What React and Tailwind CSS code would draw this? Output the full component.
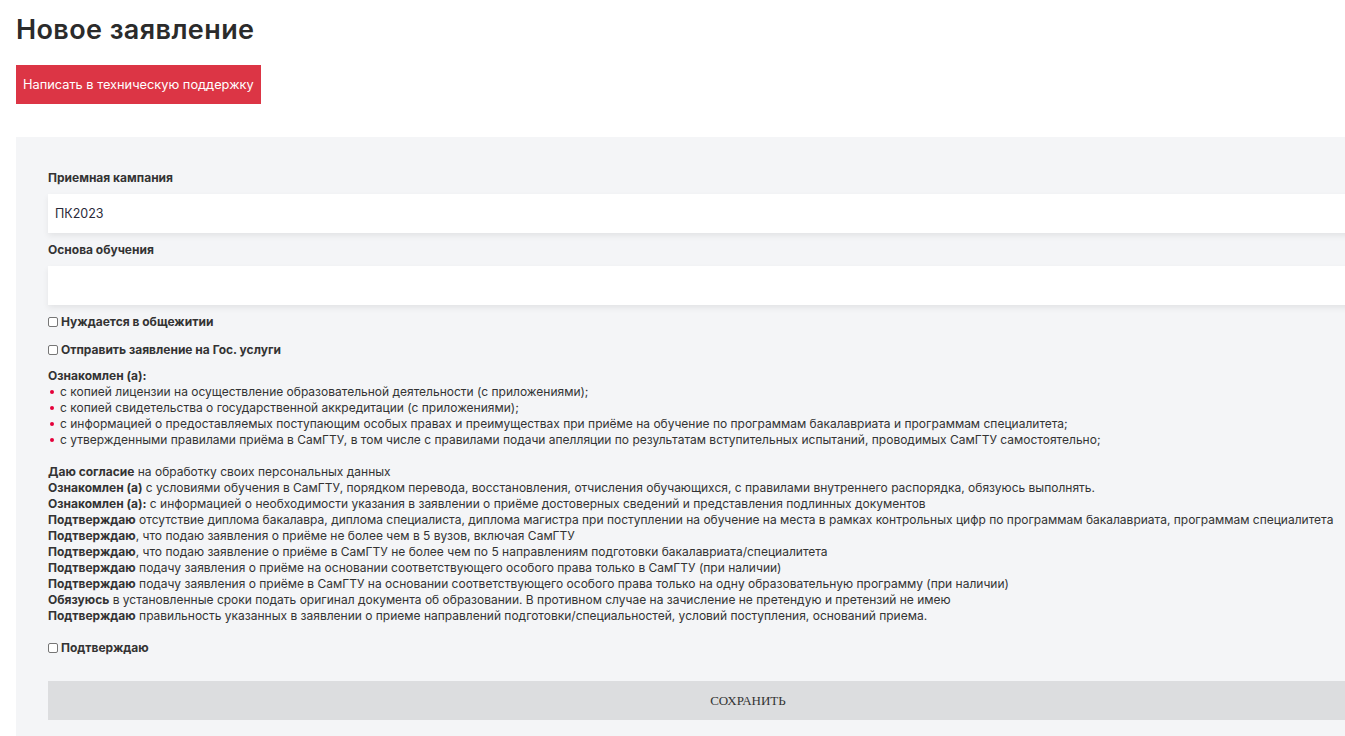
import React from 'react';

const bullets = [
    'с копией лицензии на осуществление образовательной деятельности (с приложениями);',
    'с копией свидетельства о государственной аккредитации (с приложениями);',
    'с информацией о предоставляемых поступающим особых правах и преимуществах при приёме на обучение по программам бакалавриата и программам специалитета;',
    'с утвержденными правилами приёма в СамГТУ, в том числе с правилами подачи апелляции по результатам вступительных испытаний, проводимых СамГТУ самостоятельно;',
];

const statements = [
    ['Даю согласие', ' на обработку своих персональных данных'],
    ['Ознакомлен (а)', ' с условиями обучения в СамГТУ, порядком перевода, восстановления, отчисления обучающихся, с правилами внутреннего распорядка, обязуюсь выполнять.'],
    ['Ознакомлен (а):', ' с информацией о необходимости указания в заявлении о приёме достоверных сведений и представления подлинных документов'],
    ['Подтверждаю', ' отсутствие диплома бакалавра, диплома специалиста, диплома магистра при поступлении на обучение на места в рамках контрольных цифр по программам бакалавриата, программам специалитета'],
    ['Подтверждаю', ', что подаю заявления о приёме не более чем в 5 вузов, включая СамГТУ'],
    ['Подтверждаю', ', что подаю заявление о приёме в СамГТУ не более чем по 5 направлениям подготовки бакалавриата/специалитета'],
    ['Подтверждаю', ' подачу заявления о приёме на основании соответствующего особого права только в СамГТУ (при наличии)'],
    ['Подтверждаю', ' подачу заявления о приёме в СамГТУ на основании соответствующего особого права только на одну образовательную программу (при наличии)'],
    ['Обязуюсь', ' в установленные сроки подать оригинал документа об образовании. В противном случае на зачисление не претендую и претензий не имею'],
    ['Подтверждаю', ' правильность указанных в заявлении о приеме направлений подготовки/специальностей, условий поступления, оснований приема.'],
];

const Check = ({ label }) => (
    <label className="flex items-center h-4 text-[12px] font-bold text-[#333]">
        <input type="checkbox" className="appearance-none w-[10px] h-[10px] mr-[3px] border border-[#767676] rounded-[2px] bg-white shrink-0" />
        {label}
    </label>
);

const Field = ({ label, value }) => (
    <div>
        <div className="h-4 leading-4 text-[12px] font-bold text-[#333]">{label}</div>
        <div className="mt-2 h-[39px] bg-white shadow-[0_3px_6px_rgba(0,0,0,0.07)] flex items-center pt-px px-[7px] text-[12.5px] text-[#2a2a3a]">
            {value}
        </div>
    </div>
);

export default function App() {
    return (
        <div className="w-[1345px] h-[736px] overflow-hidden bg-white font-['Inter',sans-serif] text-[#333]">
            <div className="px-4 pt-3">
                <h1 className="leading-9 text-[27px] font-semibold tracking-[0.4px] text-[#2b2b2b]">Новое заявление</h1>
                <button className="mt-[17px] h-[39px] px-[7px] bg-[#dc3545] text-white text-[12.8px]">
                    Написать в техническую поддержку
                </button>
            </div>

            <div className="ml-4 mt-[33px] w-[1464px] bg-[#f4f5f7] px-8 pt-[33px] pb-8">
                <Field label="Приемная кампания" value="ПК2023" />
                <div className="mt-[9px]">
                    <Field label="Основа обучения" value="" />
                </div>

                <div className="mt-[9px]">
                    <Check label="Нуждается в общежитии" />
                </div>
                <div className="mt-3">
                    <Check label="Отправить заявление на Гос. услуги" />
                </div>

                <div className="mt-[10px] text-[12px] leading-4">
                    <div className="font-bold">Ознакомлен (а):</div>
                    <ul>
                        {bullets.map((b, i) => (
                            <li key={i} className="flex items-center">
                                <span className="w-[4px] h-[4px] rounded-full bg-[#e4003a] ml-[2px] mr-[6px] shrink-0" />
                                {b}
                            </li>
                        ))}
                    </ul>
                </div>

                <div className="mt-4 text-[12px] leading-4">
                    {statements.map(([b, t], i) => (
                        <div key={i}>
                            <b>{b}</b>{t}
                        </div>
                    ))}
                </div>

                <div className="mt-4">
                    <Check label="Подтверждаю" />
                </div>

                <button className="mt-[25px] w-full h-[39px] bg-[#dcdddf] font-['Liberation_Serif',serif] text-[13px] text-[#333]">
                    СОХРАНИТЬ
                </button>
            </div>
        </div>
    );
}
